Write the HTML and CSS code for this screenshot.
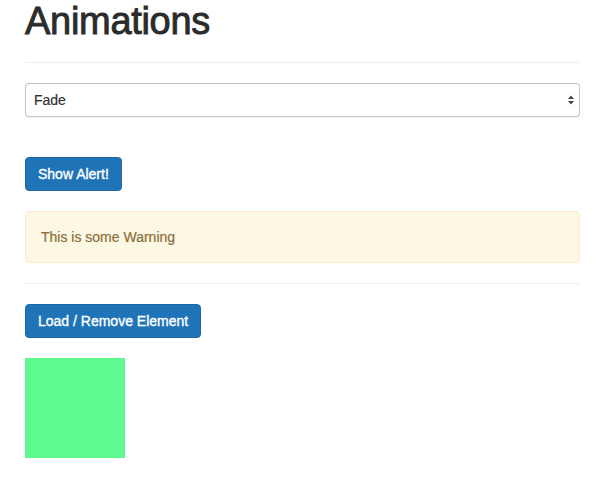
FILE: index.html
```html
<!DOCTYPE html>
<html>
<head>
<meta charset="utf-8">
<link rel="stylesheet" href="styles.css">
</head>
<body>
<div class="container">
  <h1 class="title">Animations</h1>
  <hr class="rule">
  <div class="select-wrap">
    <select class="select">
      <option>Fade</option>
    </select>
    <svg class="select-arrows" width="8" height="12" viewBox="0 0 8 12"><path d="M4 1.5 L7 5 L1 5 Z M4 10.5 L7 7 L1 7 Z" fill="#444"/></svg>
  </div>
  <button class="btn btn-alert">Show Alert!</button>
  <div class="alert">This is some Warning</div>
  <hr class="rule rule-tight">
  <button class="btn">Load / Remove Element</button>
  <div class="box"></div>
</div>
</body>
</html>
```

FILE: styles.css
```css
* { box-sizing: border-box; }
body {
  margin: 0;
  font-family: "Liberation Sans", Arial, Helvetica, sans-serif;
  font-size: 14px;
  line-height: 20px;
  color: #333;
  background: #fff;
}
.container {
  width: 580px;
  padding-left: 25px;
  display: flex;
  flex-direction: column;
  align-items: flex-start;
}
.title {
  margin: 0;
  font-size: 38px;
  line-height: 42px;
  font-weight: 500;
  color: #2b2b2b;
  -webkit-text-stroke: 0.9px #2b2b2b;
  letter-spacing: -0.3px;
}
.rule {
  align-self: stretch;
  margin: 20px 0 20px;
  border: 0;
  border-top: 1px solid #eee;
  height: 0;
}
.rule-tight { margin-top: 0; }
.select-wrap {
  position: relative;
  align-self: stretch;
  height: 34px;
  margin-bottom: 40px;
}
.select {
  appearance: none;
  -webkit-appearance: none;
  width: 100%;
  height: 34px;
  padding: 0 8px;
  font-family: inherit;
  font-size: 14px;
  color: #333;
  background: #fff;
  border: 1px solid #c6c6c6;
  border-top-color: #bdbdbd;
  border-radius: 4px;
  box-shadow: 0 1px 1px rgba(0,0,0,0.06);
  -webkit-text-stroke: 0.2px #333;
}
.select-arrows {
  position: absolute;
  right: 5px;
  top: 11px;
  pointer-events: none;
}
.btn {
  font-family: inherit;
  font-size: 14px;
  line-height: 20px;
  color: #fff;
  background: #1f74b8;
  border: 1px solid #1b68a6;
  border-radius: 4px;
  padding: 6px 12px;
  height: 34px;
  cursor: pointer;
  -webkit-text-stroke: 0.35px #fff;
}
.btn-alert { margin-bottom: 20px; }
.alert {
  align-self: stretch;
  padding: 15px;
  background: #fcf8e3;
  border: 1px solid #faebcc;
  border-radius: 4px;
  color: #8a6d3b;
  margin-bottom: 20px;
  height: 52px;
  line-height: 20px;
  -webkit-text-stroke: 0.2px #8a6d3b;
}
.box {
  margin-top: 20px;
  width: 100px;
  height: 100px;
  background: #5ef990;
}
```
